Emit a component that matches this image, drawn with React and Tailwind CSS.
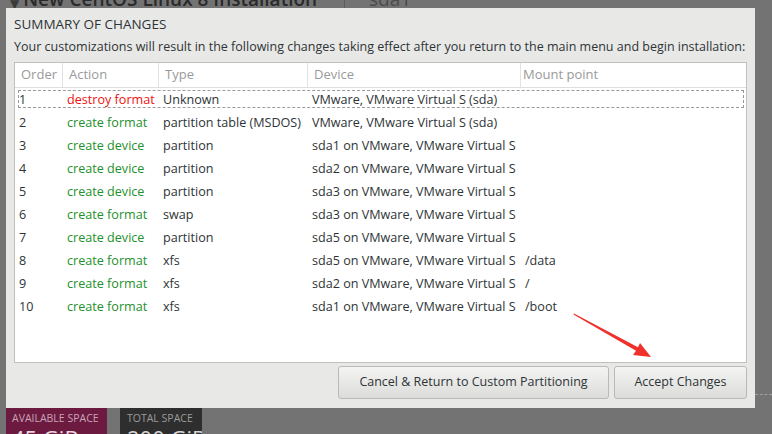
import React from "react";

const rows = [
  { order: "1", action: "destroy format", type: "Unknown", device: "VMware, VMware Virtual S (sda)", mount: "" },
  { order: "2", action: "create format", type: "partition table (MSDOS)", device: "VMware, VMware Virtual S (sda)", mount: "" },
  { order: "3", action: "create device", type: "partition", device: "sda1 on VMware, VMware Virtual S", mount: "" },
  { order: "4", action: "create device", type: "partition", device: "sda2 on VMware, VMware Virtual S", mount: "" },
  { order: "5", action: "create device", type: "partition", device: "sda3 on VMware, VMware Virtual S", mount: "" },
  { order: "6", action: "create format", type: "swap", device: "sda3 on VMware, VMware Virtual S", mount: "" },
  { order: "7", action: "create device", type: "partition", device: "sda5 on VMware, VMware Virtual S", mount: "" },
  { order: "8", action: "create format", type: "xfs", device: "sda5 on VMware, VMware Virtual S", mount: "/data" },
  { order: "9", action: "create format", type: "xfs", device: "sda2 on VMware, VMware Virtual S", mount: "/" },
  { order: "10", action: "create format", type: "xfs", device: "sda1 on VMware, VMware Virtual S", mount: "/boot" },
];

function Row({ row, focused }) {
  return (
    <div className="relative flex h-[23px] pt-[1px] items-center text-[12.6px] text-[#2e3436]">
      {focused && (
        <div className="absolute left-[3px] right-[2px] top-[2px] bottom-[3px] border border-dashed border-[#9a9a9a]" />
      )}
      <div className="w-[47px] shrink-0 pl-[4px]">{row.order}</div>
      <div
        className={`w-[96px] shrink-0 pl-[5px] whitespace-nowrap ${
          row.action.startsWith("destroy") ? "text-[#ee1111]" : "text-[#23912b]"
        }`}
      >
        {row.action}
      </div>
      <div className="w-[149px] shrink-0 pl-[5px] whitespace-nowrap">{row.type}</div>
      <div className="w-[213px] shrink-0 pl-[5px] whitespace-nowrap">{row.device}</div>
      <div className="pl-[5px] whitespace-nowrap">{row.mount}</div>
    </div>
  );
}

export default function App() {
  return (
    <div
      className="relative w-[772px] h-[434px] overflow-hidden bg-[#737373] flex flex-col"
      style={{ fontFamily: "'Open Sans', 'DejaVu Sans', sans-serif" }}
    >
      {/* background installer header, mostly hidden */}
      <div className="h-[8px] overflow-hidden flex shrink-0">
        <div className="w-[344px] -mt-[11px] pl-[10px] flex items-start gap-[4px] text-[#2a2a2a] text-[19px] font-semibold leading-[20px] whitespace-nowrap">
          <span className="text-[12px] text-[#3a3a3a] mt-[5px]">▼</span>
          <span>New CentOS Linux 8 Installation</span>
        </div>
        <div className="w-px bg-[#5c5c5c]" />
        <div className="-mt-[11px] pl-[24px] text-[19px] leading-[20px] text-[#4a4a4a]">sda1</div>
      </div>

      <div className="flex shrink-0">
        <div className="w-[6px]" />
        {/* dialog */}
        <div className="w-[749px] h-[400px] bg-[#e8e8e7] px-[8px] pt-[7px] flex flex-col">
          <div className="text-[13.5px] leading-[18px] text-[#2e3436]">SUMMARY OF CHANGES</div>
          <div className="mt-[5px] text-[12.5px] leading-[18px] text-[#2e3436] whitespace-nowrap">
            Your customizations will result in the following changes taking effect after you return to the main menu and begin installation:
          </div>
          <div className="mt-[6px] h-[301px] bg-white border border-[#c0c0bd] flex flex-col">
            <div className="flex h-[25px] items-center border-b border-[#dedede] text-[13px] text-[#9a9a9a]">
              <div className="w-[47px] h-full flex items-center pl-[6px]">Order</div>
              <div className="w-[96px] h-full flex items-center pl-[6px] border-l border-[#e2e2e2]">Action</div>
              <div className="w-[149px] h-full flex items-center pl-[6px] border-l border-[#e2e2e2]">Type</div>
              <div className="w-[213px] h-full flex items-center pl-[6px] border-l border-[#e2e2e2]">Device</div>
              <div className="flex-1 h-full flex items-center pl-[2px] border-l border-[#e2e2e2]">Mount point</div>
            </div>
            {rows.map((r, i) => (
              <Row key={r.order} row={r} focused={i === 0} />
            ))}
          </div>
          <div className="mt-[3px] flex justify-end gap-[5px]">
            <button className="w-[271px] h-[33px] rounded-[3px] border border-[#b9b9b6] bg-gradient-to-b from-[#f4f4f3] to-[#dcdcda] text-[12.5px] text-[#2e3436]">
              Cancel &amp; Return to Custom Partitioning
            </button>
            <button className="w-[133px] h-[33px] rounded-[3px] border border-[#b9b9b6] bg-gradient-to-b from-[#f4f4f3] to-[#dcdcda] text-[12.5px] text-[#2e3436]">
              Accept Changes
            </button>
          </div>
        </div>
        <div className="flex-1 flex flex-col">
          <div className="h-[386px]" />
          <div className="border-t border-dashed border-[#a0a0a0]" />
        </div>
      </div>

      {/* space summary behind the dialog */}
      <div className="flex flex-1">
        <div className="w-[6px]" />
        <div className="w-[101px] overflow-hidden bg-[#6c1a40] pl-[6px] pt-[3px] text-[10.5px] leading-[14px] text-[#c8a4b6] whitespace-nowrap">
          <div>AVAILABLE SPACE</div>
          <div className="text-[22px] leading-[24px] mt-[1px] text-[#e6d6de]">45 GiB</div>
        </div>
        <div className="w-[13px]" />
        <div className="w-[82px] overflow-hidden bg-[#2e2e2e] pl-[7px] pt-[3px] text-[10.5px] leading-[14px] text-[#9c9c9c] whitespace-nowrap">
          <div>TOTAL SPACE</div>
          <div className="text-[22px] leading-[24px] mt-[1px] text-[#d4d4d4]">200 GiB</div>
        </div>
      </div>

      {/* red annotation arrow */}
      <svg className="absolute left-0 top-0 pointer-events-none" width="772" height="434">
        <polygon
          points="574,313.5 638,347.3 640,343 651,357 633,355 636,350.7 573.5,314.5"
          fill="#f0302a"
        />
      </svg>
    </div>
  );
}
